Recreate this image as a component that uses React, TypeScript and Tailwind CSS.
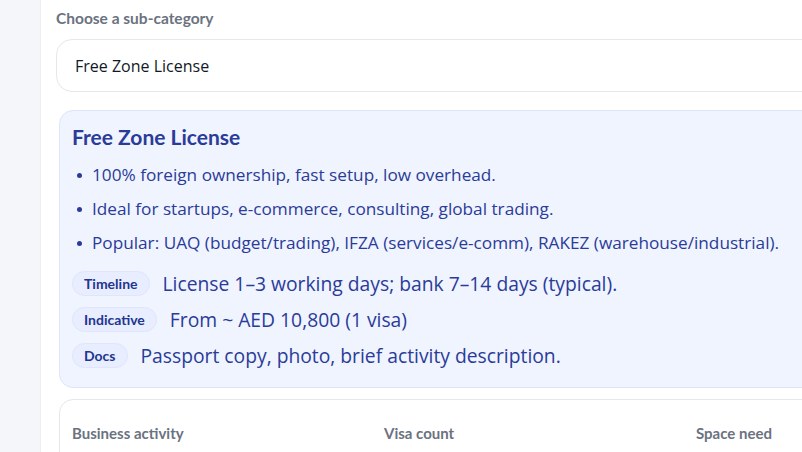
import { useState } from 'react';

const BULLETS = [
  '100% foreign ownership, fast setup, low overhead.',
  'Ideal for startups, e-commerce, consulting, global trading.',
  'Popular: UAQ (budget/trading), IFZA (services/e-comm), RAKEZ (warehouse/industrial).',
];

const FACTS = [
  { label: 'Timeline', text: 'License 1–3 working days; bank 7–14 days (typical).' },
  { label: 'Indicative', text: 'From ~ AED 10,800 (1 visa)' },
  { label: 'Docs', text: 'Passport copy, photo, brief activity description.' },
];

const HEADING_FONT = "font-['Lato','Noto_Sans',sans-serif]";

export default function App() {
  const [sub] = useState('Free Zone License');

  return (
    <div className="flex h-[452px] w-[802px] overflow-hidden bg-white font-['Open_Sans','Noto_Sans',sans-serif]">
      <aside className="w-[41px] shrink-0 border-r border-[#eceef4] bg-[#f5f6fa]" />

      <main className="w-[800px] shrink-0 pl-[15px] pt-[7px]">
        <label className={`block text-[15.5px] font-bold leading-[22px] text-[#6b7280] ${HEADING_FONT}`}>
          Choose a sub-category
        </label>

        <div className="mt-[10px] flex h-[53px] items-center rounded-[16px] border border-[#e5e7eb] px-[18px] text-[16px] text-[#111827]">
          {sub}
        </div>

        <section className="ml-[3px] mt-[18px] rounded-[14px] border border-[#dbe5fb] bg-[#eff4ff] px-[12px] pb-[19px] pt-[12px] text-[#2b3b98]">
          <h3 className={`text-[21px] font-bold leading-[28px] ${HEADING_FONT}`}>{sub}</h3>

          <ul className="mt-[12px] flex flex-col gap-[10px] pl-[5px] text-[17.2px] leading-[24px]">
            {BULLETS.map((b) => (
              <li key={b} className="flex items-center gap-[10px]">
                <span className="h-[5px] w-[5px] shrink-0 rounded-full bg-[#2b3b98]" />
                {b}
              </li>
            ))}
          </ul>

          <div className="mt-[16px] flex flex-col gap-[11px]">
            {FACTS.map((f) => (
              <div key={f.label} className="flex items-center gap-[13px]">
                <span
                  className={`rounded-full border border-[#dfe6fb] bg-[#e8eeff] px-[11px] py-[3px] text-[14px] font-bold leading-[17px] text-[#22358f] ${HEADING_FONT}`}
                >
                  {f.label}
                </span>
                <span className="text-[19.3px] leading-[24px]">{f.text}</span>
              </div>
            ))}
          </div>
        </section>

        <section className="ml-[3px] mt-[11px] h-[80px] rounded-[14px] border border-[#e5e7eb] bg-white px-[12px] pt-[22px]">
          <div className={`grid grid-cols-[312px_312px_1fr] text-[15px] font-bold text-[#6b7280] ${HEADING_FONT}`}>
            <span>Business activity</span>
            <span>Visa count</span>
            <span>Space need</span>
          </div>
        </section>
      </main>
    </div>
  );
}
